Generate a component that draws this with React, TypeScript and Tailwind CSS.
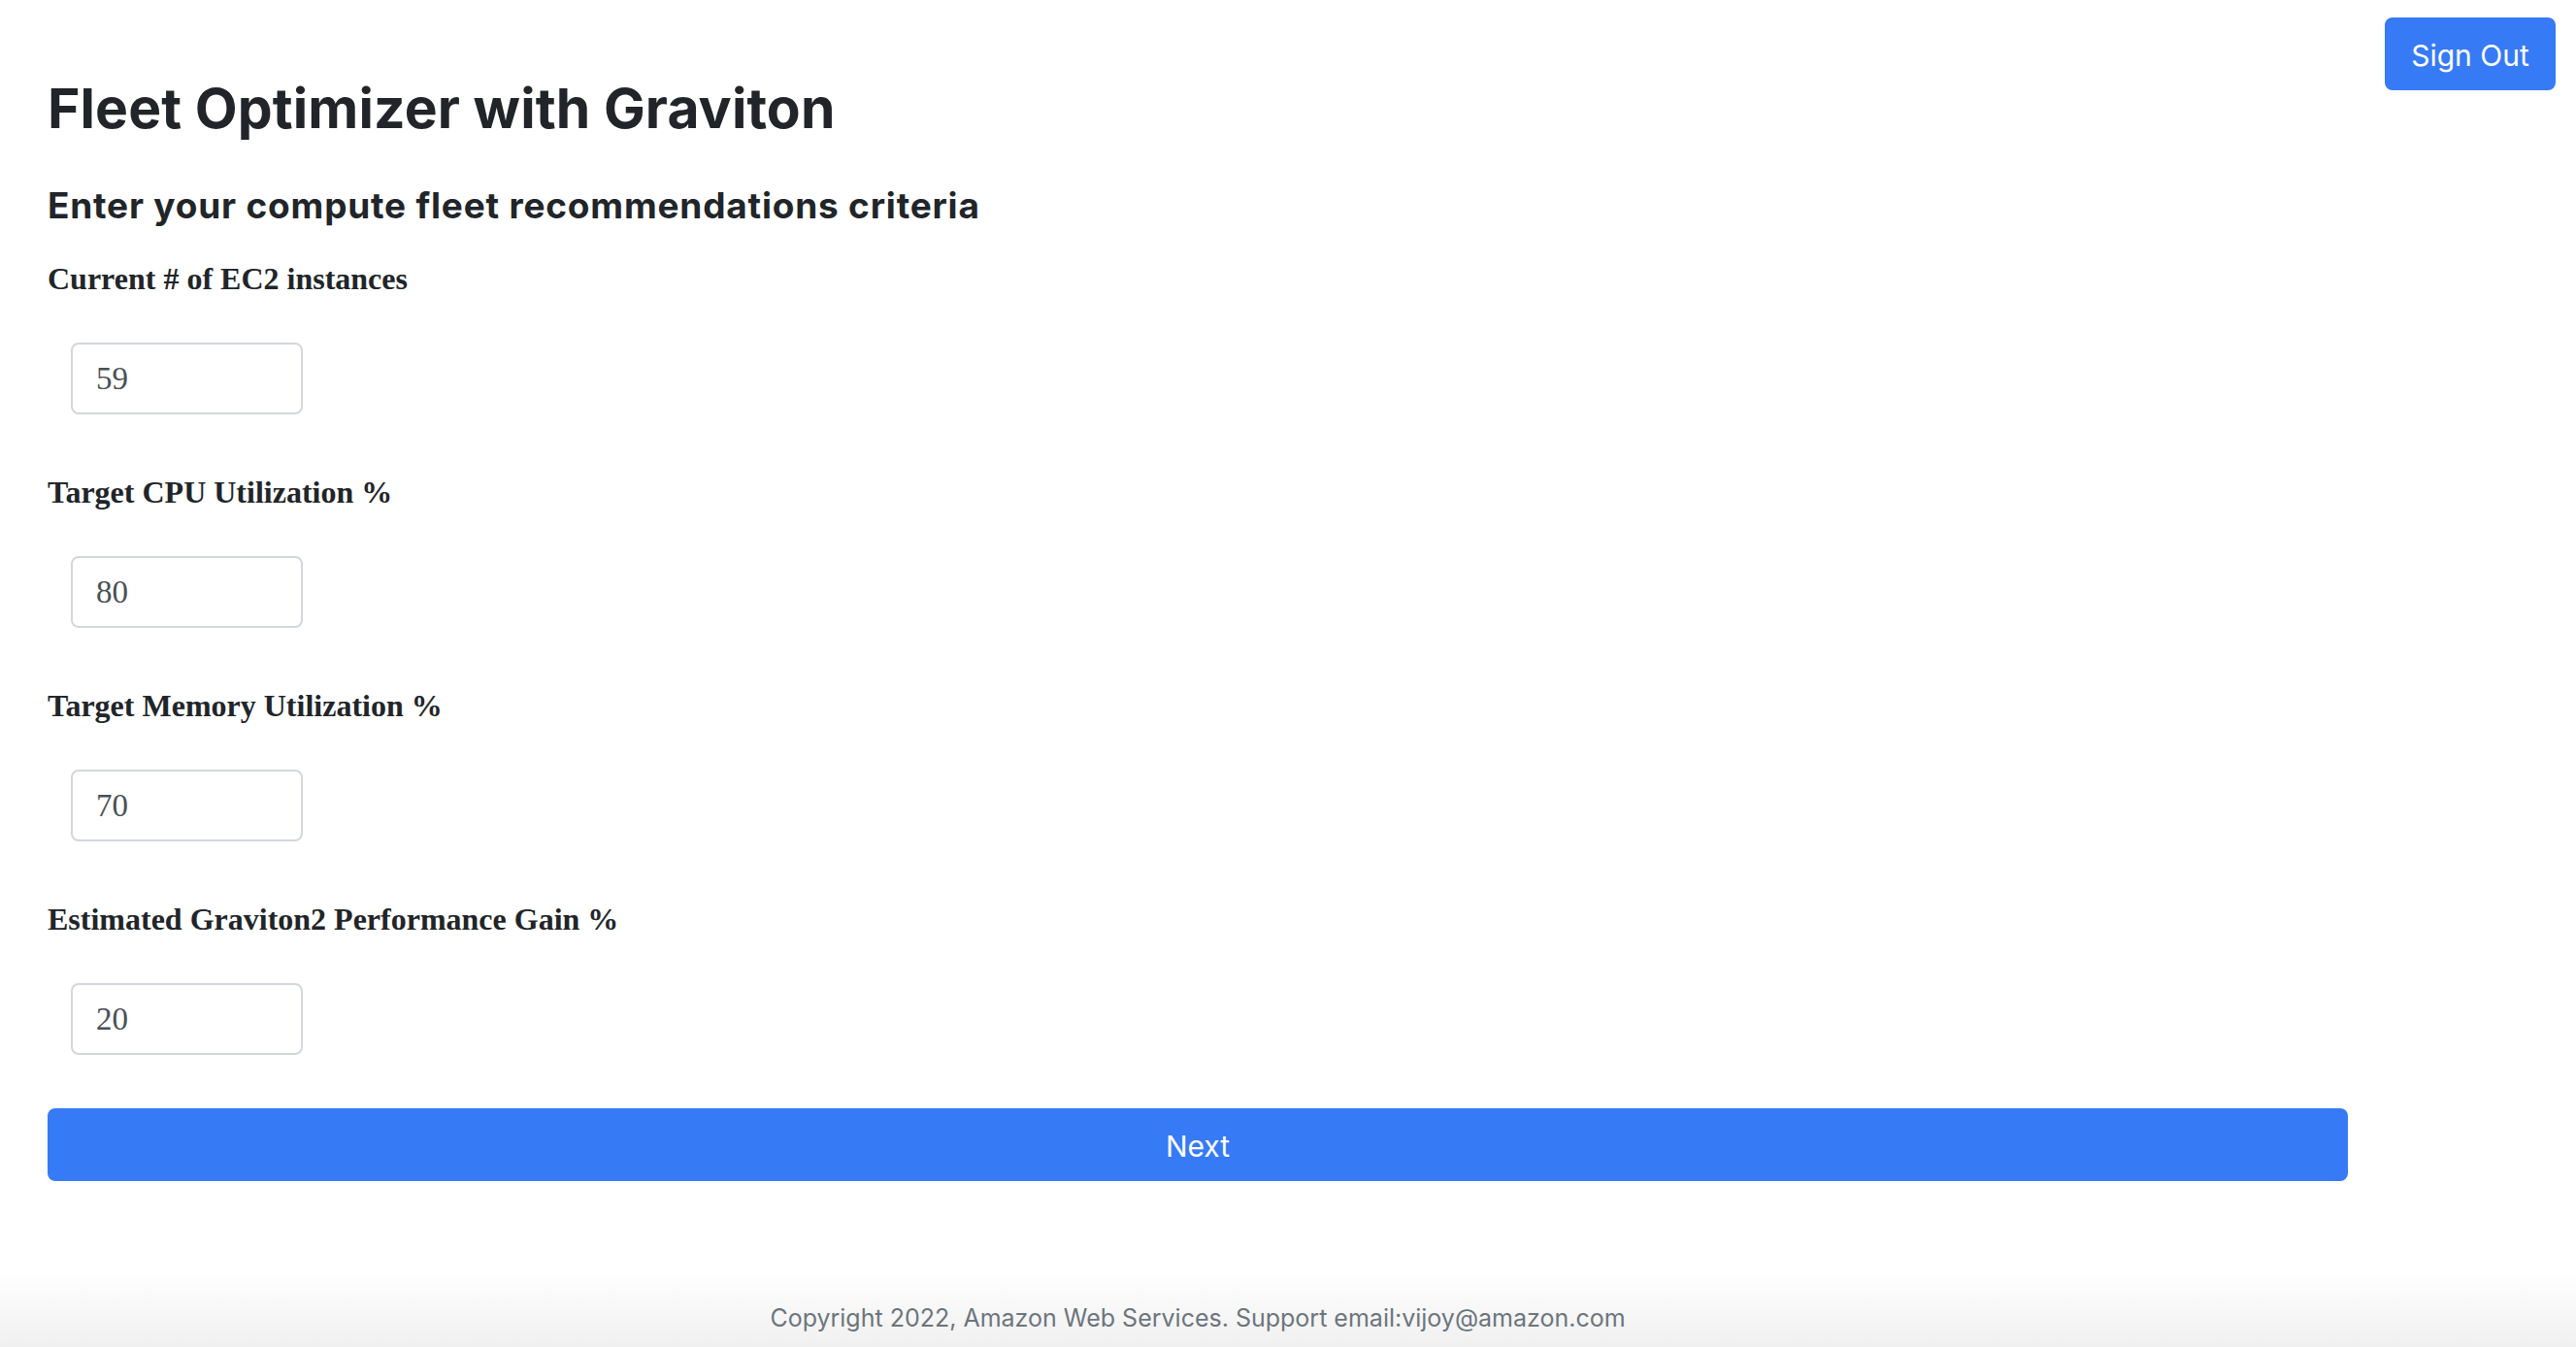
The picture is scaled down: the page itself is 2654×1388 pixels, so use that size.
import React from "react";

const fields = [
  { label: "Current # of EC2 instances", value: "59" },
  { label: "Target CPU Utilization %", value: "80" },
  { label: "Target Memory Utilization %", value: "70" },
  { label: "Estimated Graviton2 Performance Gain %", value: "20" },
];

export default function App() {
  return (
    <div className="min-h-screen flex flex-col bg-white text-[#212529]">
      <div className="flex flex-1 pl-[49px] pr-[21px]">
        <main className="w-[2370px] pt-[78px] flex flex-col">
          <h1 className="font-['Inter',sans-serif] font-bold text-[57px] leading-[68px] tracking-[0.1px]">
            Fleet Optimizer with Graviton
          </h1>
          <h3 className="mt-[44px] font-['Inter',sans-serif] font-bold text-[37px] leading-[43px] tracking-[0.8px]">
            Enter your compute fleet recommendations criteria
          </h3>
          <div className="mt-[35px] flex flex-col">
            {fields.map((f, i) => (
              <div key={f.label} className={i === 0 ? "flex flex-col" : "flex flex-col mt-[61px]"}>
                <label className="font-['Liberation_Serif',serif] font-bold text-[32px] leading-[38px]">
                  {f.label}
                </label>
                <div className="mt-[47px] pl-[24px]">
                  <input
                    type="text"
                    defaultValue={f.value}
                    className="w-[239px] h-[74px] border-[2px] border-[#d3d7dc] rounded-[8px] pl-[24px] font-['Liberation_Serif',serif] text-[33px] text-[#4a5057] bg-white outline-none"
                  />
                </div>
              </div>
            ))}
          </div>
          <button className="mt-[55px] w-full h-[75px] rounded-[8px] bg-[#367af6] text-white font-['Inter',sans-serif] text-[30px] leading-[36px] pt-[2px]">
            Next
          </button>
        </main>
        <div className="ml-[38px] mt-[18px] self-start">
          <button className="w-[176px] h-[75px] rounded-[8px] bg-[#367af6] text-white font-['Inter',sans-serif] text-[30px] leading-[36px] pt-[2px]">
            Sign Out
          </button>
        </div>
      </div>
      <footer className="h-[78px] bg-gradient-to-b from-white to-[#f0f0f0] pl-[49px]">
        <div className="w-[2370px] pt-[33px] text-center font-['Inter',sans-serif] text-[25px] leading-[30px] text-[#6c757d]">
          Copyright 2022, Amazon Web Services. Support email:vijoy@amazon.com
        </div>
      </footer>
    </div>
  );
}
